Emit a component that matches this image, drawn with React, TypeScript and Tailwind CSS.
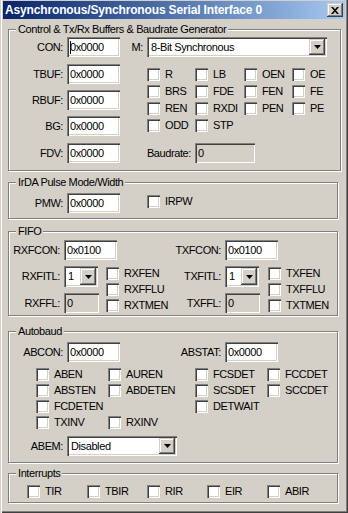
import React from 'react';

const sunken =
    'shadow-[inset_1px_1px_#808080,inset_2px_2px_#404040,inset_-1px_-1px_#ffffff,inset_-2px_-2px_#d4d0c8]';
const raised =
    'shadow-[inset_-1px_-1px_#404040,inset_1px_1px_#d4d0c8,inset_-2px_-2px_#808080,inset_2px_2px_#ffffff]';

const Arrow = () => (
    <svg width="7" height="4" viewBox="0 0 7 4">
        <path d="M0 0h7L3.5 4z" fill="#000" />
    </svg>
);

const Edit = ({
    value,
    w,
    disabled,
    caret,
}: {
    value: string;
    w: string;
    disabled?: boolean;
    caret?: boolean;
}) => (
    <div
        className={`${w} h-[20px] flex items-center pl-[3px] ${sunken} ${disabled ? 'bg-[#d4d0c8]' : 'bg-white'}`}
    >
        {caret && <span className="w-[1px] h-[13px] bg-black -mr-[1px]" />}
        {value}
    </div>
);

const Combo = ({ value, w, h = 'h-[20px]' }: { value: string; w: string; h?: string }) => (
    <div className={`${w} ${h} flex items-center justify-between pl-[4px] pr-[2px] bg-white ${sunken}`}>
        <span>{value}</span>
        <div className={`w-[16px] h-[calc(100%-4px)] flex items-center justify-center bg-[#d4d0c8] ${raised}`}>
            <Arrow />
        </div>
    </div>
);

const Label = ({ text, w }: { text: string; w: string }) => (
    <span className={`${w} text-right pr-[4px] shrink-0`}>{text}</span>
);

const Check = ({ label, className = '' }: { label?: string; className?: string }) => (
    <div className={`flex items-center h-[13px] ${className}`}>
        <span className={`w-[13px] h-[13px] bg-white shrink-0 ${sunken}`} />
        {label && <span className="ml-[5px]">{label}</span>}
    </div>
);

const Group = ({
    title,
    className,
    children,
}: {
    title: string;
    className: string;
    children: React.ReactNode;
}) => (
    <fieldset
        className={`ml-[8px] w-[330px] border border-[#808080] shadow-[inset_1px_1px_#ffffff,1px_1px_#ffffff] ${className}`}
    >
        <legend className="ml-[7px] px-[2px] leading-[12px] bg-[#d4d0c8]">{title}</legend>
        {children}
    </fieldset>
);

export default function App() {
    return (
        <div className="w-[348px] h-[513px] bg-[#d4d0c8] pt-[1px] px-[3px] text-[11px] leading-[13px] tracking-[-0.4px] text-black font-['Liberation_Sans',Arial,sans-serif] shadow-[inset_1px_0_#d4d0c8,inset_2px_0_#ffffff,inset_-1px_-1px_#404040,inset_-2px_-2px_#808080] flex flex-col">
            {/* title bar */}
            <div className="h-[18px] flex items-center justify-between pl-[2px] pr-[2px] bg-gradient-to-r from-[#0a246a] to-[#a6caf0]">
                <span className="text-white font-bold text-[12px] tracking-[-0.15px]">
                    Asynchronous/Synchronous Serial Interface 0
                </span>
                <div className={`w-[16px] h-[14px] flex items-center justify-center bg-[#d4d0c8] ${raised}`}>
                    <svg width="8" height="7" viewBox="0 0 8 7">
                        <path d="M0 0h2l2 2.2L6 0h2L5 3.5 8 7H6L4 4.8 2 7H0l3-3.5z" fill="#000" />
                    </svg>
                </div>
            </div>

            <div className="-mx-[3px] flex flex-col">
                <Group title="Control & Tx/Rx Buffers & Baudrate Generator" className="mt-[4px] h-[148px]">
                    <div className="flex items-center mt-[2px]">
                        <Label text="CON:" w="w-[58px]" />
                        <Edit value="0x0000" w="w-[53px]" caret />
                        <Label text="M:" w="w-[27px]" />
                        <Combo value="8-Bit Synchronous" w="w-[180px]" />
                    </div>
                    <div className="flex items-start mt-[7px]">
                        <div className="w-[138px] flex flex-col gap-[6px]">
                            {['TBUF:', 'RBUF:', 'BG:'].map((l) => (
                                <div key={l} className="flex items-center">
                                    <Label text={l} w="w-[58px]" />
                                    <Edit value="0x0000" w="w-[53px]" />
                                </div>
                            ))}
                        </div>
                        <div className="mt-[4px] grid grid-cols-[48px_49px_48px_48px] gap-y-[4px]">
                            {['R', 'LB', 'OEN', 'OE', 'BRS', 'FDE', 'FEN', 'FE', 'REN', 'RXDI', 'PEN', 'PE', 'ODD', 'STP'].map(
                                (l) => (
                                    <Check key={l} label={l} />
                                ),
                            )}
                        </div>
                    </div>
                    <div className="flex items-center mt-[7px]">
                        <Label text="FDV:" w="w-[58px]" />
                        <Edit value="0x0000" w="w-[53px]" />
                        <Label text="Baudrate:" w="w-[75px]" />
                        <Edit value="0" w="w-[60px]" disabled />
                    </div>
                </Group>

                <Group title="IrDA Pulse Mode/Width" className="mt-[5px] h-[43px]">
                    <div className="flex items-center mt-[5px]">
                        <Label text="PMW:" w="w-[58px]" />
                        <Edit value="0x0000" w="w-[53px]" />
                        <Check label="IRPW" className="ml-[27px] -mt-[3px]" />
                    </div>
                </Group>

                <Group title="FIFO" className="mt-[6px] h-[91px]">
                    <div className="flex mt-[3px]">
                        <div className="w-[161px] flex items-center">
                            <Label text="RXFCON:" w="w-[55px]" />
                            <Edit value="0x0100" w="w-[53px]" />
                        </div>
                        <div className="flex items-center">
                            <Label text="TXFCON:" w="w-[55px]" />
                            <Edit value="0x0100" w="w-[53px]" />
                        </div>
                    </div>
                    <div className="flex mt-[6px]">
                        {[
                            { p: 'RX', ml: 'ml-[7px] w-[64px]' },
                            { p: 'TX', ml: 'ml-[8px]' },
                        ].map(({ p, ml }) => (
                            <div key={p} className="flex items-start">
                                <div className="flex flex-col">
                                    <div className="flex items-center">
                                        <Label text={`${p}FITL:`} w="w-[55px]" />
                                        <Combo value="1" w="w-[34px]" h="h-[21px]" />
                                    </div>
                                    <div className="flex items-center mt-[6px]">
                                        <Label text={`${p}FFL:`} w="w-[55px]" />
                                        <Edit value="0" w="w-[35px]" disabled />
                                    </div>
                                </div>
                                <div className={`flex flex-col gap-[3px] mt-[1px] ${ml}`}>
                                    <Check label={`${p}FEN`} />
                                    <Check label={`${p}FFLU`} />
                                    <Check label={`${p}TMEN`} />
                                </div>
                            </div>
                        ))}
                    </div>
                </Group>

                <Group title="Autobaud" className="mt-[9px] h-[138px]">
                    <div className="flex items-center mt-[5px]">
                        <Label text="ABCON:" w="w-[58px]" />
                        <Edit value="0x0000" w="w-[53px]" />
                        <Label text="ABSTAT:" w="w-[105px]" />
                        <Edit value="0x0000" w="w-[53px]" />
                    </div>
                    <div className="ml-[27px] mt-[6px] grid grid-cols-[72px_87px_72px_60px] gap-y-[3px]">
                        {['ABEN', 'AUREN', 'FCSDET', 'FCCDET', 'ABSTEN', 'ABDETEN', 'SCSDET', 'SCCDET', 'FCDETEN', '', 'DETWAIT', '', 'TXINV', 'RXINV'].map(
                            (l, i) => (l ? <Check key={i} label={l} /> : <span key={i} />),
                        )}
                    </div>
                    <div className="flex items-center mt-[7px]">
                        <Label text="ABEM:" w="w-[58px]" />
                        <Combo value="Disabled" w="w-[110px]" />
                    </div>
                </Group>

                <Group title="Interrupts" className="mt-[4px] h-[36px]">
                    <div className="flex ml-[18px] mt-[6px]">
                        {['TIR', 'TBIR', 'RIR', 'EIR', 'ABIR'].map((l) => (
                            <Check key={l} label={l} className="w-[60px]" />
                        ))}
                    </div>
                </Group>
            </div>
        </div>
    );
}
